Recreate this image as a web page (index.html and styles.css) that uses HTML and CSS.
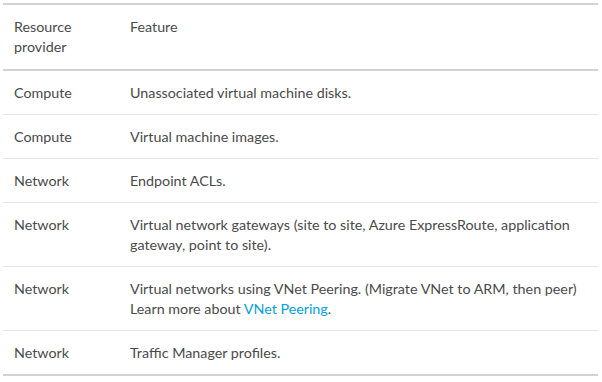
FILE: index.html
```html
<!DOCTYPE html>
<html>
<head>
<meta charset="utf-8">
<link rel="stylesheet" href="styles.css">
</head>
<body>
<table class="tbl">
  <thead>
    <tr><th class="c1">Resource<br>provider</th><th>Feature</th></tr>
  </thead>
  <tbody>
    <tr><td class="c1">Compute</td><td>Unassociated virtual machine disks.</td></tr>
    <tr><td class="c1">Compute</td><td>Virtual machine images.</td></tr>
    <tr><td class="c1">Network</td><td>Endpoint ACLs.</td></tr>
    <tr><td class="c1">Network</td><td>Virtual network gateways (site to site, Azure ExpressRoute, application<br>gateway, point to site).</td></tr>
    <tr><td class="c1">Network</td><td>Virtual networks using VNet Peering. (Migrate VNet to ARM, then peer)<br>Learn more about <a class="lnk" href="#">VNet Peering</a>.</td></tr>
    <tr><td class="c1">Network</td><td>Traffic Manager profiles.</td></tr>
  </tbody>
</table>
</body>
</html>
```
FILE: styles.css
```css
html, body {
  margin: 0;
  padding: 0;
  background: #ffffff;
}
body {
  padding: 3px 4px 0 3px;
  font-family: Lato, "Open Sans", sans-serif;
  font-size: 14.3px;
  color: #4a4a4a;
}
.tbl {
  width: 595px;
  border-collapse: collapse;
  border-top: 2px solid #d2d2d2;
  border-bottom: 2px solid #d2d2d2;
}
.tbl th, .tbl td {
  text-align: left;
  vertical-align: top;
  font-weight: normal;
  line-height: 20px;
  padding: 12px 11px 11px 11px;
}
.tbl th {
  padding-top: 12px;
  padding-bottom: 12px;
  border-bottom: 2px solid #d2d2d2;
}
.tbl td {
  border-top: 1px solid #e6e6e6;
}
.tbl tbody tr:first-child td {
  border-top: none;
}
.c1 {
  width: 94px;
}
.lnk {
  color: #00a1e6;
  text-decoration: none;
}
```
